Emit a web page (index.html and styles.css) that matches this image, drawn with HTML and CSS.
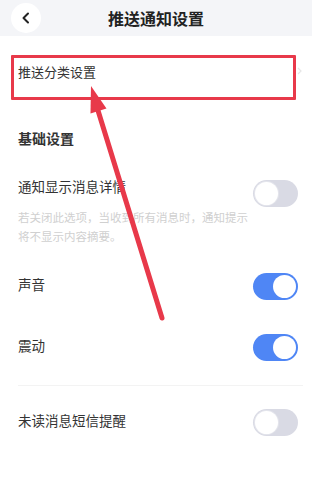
FILE: index.html
```html
<!DOCTYPE html>
<html lang="zh">
<head>
<meta charset="utf-8">
<link rel="stylesheet" href="styles.css">
</head>
<body>
<div class="page">
  <div class="header">
    <div class="back">
      <svg width="12" height="12" viewBox="0 0 12 12"><path d="M8 1.5 L3.5 6 L8 10.5" fill="none" stroke="#222" stroke-width="2" stroke-linecap="round" stroke-linejoin="round"/></svg>
    </div>
    <div class="title">推送通知设置</div>
  </div>

  <div class="cat-row">
    <span class="cat-text">推送分类设置</span>
    <svg class="chev" width="5" height="8" viewBox="0 0 5 8"><path d="M1 1 L4 4 L1 7" fill="none" stroke="#e6e6e6" stroke-width="1.2"/></svg>
  </div>

  <div class="section-title">基础设置</div>

  <div class="row row-detail">
    <span class="label">通知显示消息详情</span>
    <span class="toggle off"><span class="knob"></span></span>
  </div>
  <div class="desc">若关闭此选项，当收到所有消息时，通知提示将不显示内容摘要。</div>

  <div class="row row-sound">
    <span class="label">声音</span>
    <span class="toggle on"><span class="knob"></span></span>
  </div>

  <div class="row row-vibe">
    <span class="label">震动</span>
    <span class="toggle on"><span class="knob"></span></span>
  </div>

  <div class="divider"></div>

  <div class="row row-sms">
    <span class="label">未读消息短信提醒</span>
    <span class="toggle off"><span class="knob"></span></span>
  </div>

  <div class="highlight"></div>
  <svg class="arrow" width="333" height="489" viewBox="0 0 333 489">
    <line x1="162" y1="318" x2="96" y2="104" stroke="#e8394a" stroke-width="5" stroke-linecap="round"/>
    <polygon points="91,86 106.5,108.6 90.5,113.5" fill="#e8394a"/>
  </svg>
</div>
</body>
</html>
```

FILE: styles.css
```css
* { box-sizing: border-box; }
html, body {
  margin: 0;
  padding: 0;
  background: #ffffff;
}
body {
  font-family: "Noto Sans CJK SC", "Noto Sans", sans-serif;
  color: #333;
}
.page {
  position: relative;
  width: 333px;
  height: 489px;
  overflow: hidden;
}
.header {
  width: 312px;
  height: 36px;
  background: #f4f5f8;
  display: flex;
  align-items: center;
  position: relative;
}
.back {
  width: 30px;
  height: 30px;
  margin-left: 11px;
  border-radius: 50%;
  background: #ffffff;
  display: flex;
  align-items: center;
  justify-content: center;
}
.title {
  flex: 1;
  text-align: center;
  font-size: 16px;
  font-weight: 700;
  color: #222;
  margin-right: 33px;
  margin-left: -8px;
  line-height: 20px;
}
.cat-row {
  height: 72px;
  display: flex;
  align-items: center;
  justify-content: space-between;
  padding-left: 18px;
  padding-right: 31px;
}
.cat-text {
  font-size: 13px;
  color: #333;
  line-height: 18px;
}
.chev { margin-top: -3px; }
.section-title {
  margin-top: 20px;
  padding-left: 18px;
  font-size: 14px;
  font-weight: 700;
  line-height: 20px;
  color: #333;
}
.row {
  display: flex;
  justify-content: space-between;
  align-items: center;
  padding-left: 18px;
  padding-right: 35px;
  height: 44px;
}
.label {
  font-size: 13.5px;
  line-height: 20px;
  color: #333;
}
.row-detail {
  margin-top: 27px;
  height: 30px;
  align-items: flex-start;
}
.row-detail .label { margin-top: 1px; }
.row-detail .toggle { margin-top: 5px; }
.desc {
  padding-left: 18px;
  width: 251px;
  font-size: 11.5px;
  line-height: 19px;
  color: #d0d0d0;
  margin-top: 3px;
}
.row-sound { margin-top: 18px; }
.row-sound .label, .row-vibe .label, .row-sms .label { margin-top: -5px; }
.row-vibe { margin-top: 17px; }
.divider {
  margin: 16px 30px 0 18px;
  height: 1px;
  background: #f3f3f3;
}
.row-sms { margin-top: 14px; }
.toggle {
  width: 45px;
  height: 27px;
  border-radius: 14px;
  display: flex;
  align-items: center;
  padding: 2px;
  flex-shrink: 0;
}
.toggle .knob {
  width: 23px;
  height: 23px;
  border-radius: 50%;
  background: #ffffff;
}
.toggle.on {
  background: #4f86f5;
  justify-content: flex-end;
}
.toggle.off {
  background: #d9dae4;
  justify-content: flex-start;
}
.toggle.off .knob {
  box-shadow: 0 0 0 1px #e4e5ec;
}
.highlight {
  position: absolute;
  left: 11px;
  top: 55px;
  width: 285px;
  height: 45px;
  border: 3px solid #e8394a;
  border-radius: 1px;
}
.arrow {
  position: absolute;
  left: 0;
  top: 0;
}
```
